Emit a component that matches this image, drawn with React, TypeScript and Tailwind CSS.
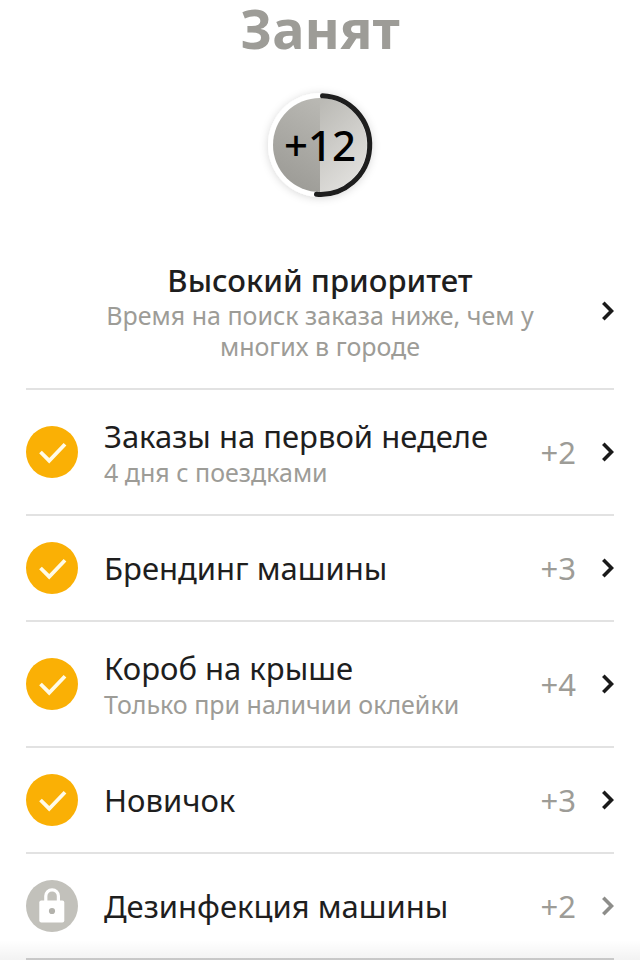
import clsx from 'clsx';

type Factor = {
  title: string;
  note?: string;
  points: string;
  locked?: boolean;
};

const factors: Factor[] = [
  { title: 'Заказы на первой неделе', note: '4 дня с поездками', points: '+2' },
  { title: 'Брендинг машины', points: '+3' },
  { title: 'Короб на крыше', note: 'Только при наличии оклейки', points: '+4' },
  { title: 'Новичок', points: '+3' },
  { title: 'Дезинфекция машины', points: '+2', locked: true },
];

function Chevron({ className }: { className?: string }) {
  return (
    <svg
      className={clsx('h-5 w-3 shrink-0', className)}
      viewBox="0 0 12 20"
      fill="none"
      stroke="currentColor"
      strokeWidth="3.6"
      aria-hidden="true"
    >
      <path d="M1.3 1.8 9.5 10l-8.2 8.2" />
    </svg>
  );
}

function CheckBadge() {
  return (
    <svg className="h-[52px] w-[52px] shrink-0" viewBox="0 0 52 52" fill="none" aria-hidden="true">
      <circle cx="26" cy="26" r="26" fill="#fab005" />
      <path d="m14.5 26 8.7 8.7L39 18.3" stroke="#fffbe8" strokeWidth="3.8" />
    </svg>
  );
}

function LockBadge() {
  return (
    <svg className="h-[52px] w-[52px] shrink-0" viewBox="0 0 52 52" fill="none" aria-hidden="true">
      <circle cx="26" cy="26" r="26" fill="#c2c1bb" />
      <path d="M19.8 21v-4.9a6.3 6.3 0 0 1 12.6 0V21" stroke="#fff" strokeWidth="3.2" />
      <rect x="13.3" y="20.5" width="25" height="22" rx="2" fill="#fff" />
      <circle cx="26" cy="31" r="3.1" fill="#b3b2ac" />
    </svg>
  );
}

function ScoreRing() {
  return (
    <div className="relative flex h-[106px] w-[106px] items-center justify-center">
      <svg className="absolute inset-0 h-full w-full overflow-visible" viewBox="0 0 106 106" fill="none" aria-hidden="true">
        <defs>
          <linearGradient id="left-half" x1="0.9" y1="0" x2="0.6" y2="1">
            <stop offset="0" stopColor="#b9b8b3" />
            <stop offset="1" stopColor="#9d9c97" />
          </linearGradient>
          <linearGradient id="right-half" x1="0" y1="0" x2="0.5" y2="1">
            <stop offset="0" stopColor="#b9b8b3" />
            <stop offset="1" stopColor="#e0dfdc" />
          </linearGradient>
          <filter id="ring-shadow" x="-20%" y="-20%" width="140%" height="140%">
            <feDropShadow dx="0" dy="1" stdDeviation="4" floodColor="#000" floodOpacity="0.16" />
          </filter>
        </defs>
        <circle cx="53" cy="53" r="52" fill="#fff" filter="url(#ring-shadow)" />
        <path d="M53 6a47 47 0 0 0 0 94z" fill="url(#left-half)" />
        <path d="M53 6a47 47 0 0 1 0 94z" fill="url(#right-half)" />
        <path d="M55.5 3.8A49.3 49.3 0 1 1 49.5 102.2" stroke="#1e1e1e" strokeWidth="5" strokeLinecap="round" />
      </svg>
      <span className="relative text-[42px] leading-none font-medium text-black">+12</span>
    </div>
  );
}

function FactorRow({ title, note, points, locked }: Factor) {
  return (
    <li className="border-b-2 border-[#e2e2e2] last:border-[#d2d2d2]">
      <button type="button" className="flex w-full items-center py-[26px] text-left">
        {locked ? <LockBadge /> : <CheckBadge />}
        <span className="ml-[26px] min-w-0 flex-1">
          <span className="block text-[31px] leading-10 text-[#1e1e1e]">{title}</span>
          {note && <span className="block text-[25px] leading-8 text-[#9d9c97]">{note}</span>}
        </span>
        <span className="mr-[26px] text-[31px] leading-10 text-[#9d9c97]">{points}</span>
        <Chevron className={locked ? 'text-[#8d8d8a]' : 'text-[#1a1a1a]'} />
      </button>
    </li>
  );
}

export default function App() {
  return (
    <main className="relative bg-white px-[26px] font-['Noto_Sans',sans-serif]">
      {/* Fade under the last row */}
      <div className="pointer-events-none absolute inset-x-0 bottom-0 h-5 bg-gradient-to-b from-transparent to-black/5" />

      <header className="flex flex-col items-center">
        <h1 className="text-[54px] leading-[56px] font-bold text-[#9d9c97]">Занят</h1>
        <div className="mt-9">
          <ScoreRing />
        </div>
      </header>

      <button type="button" className="mt-[62px] flex w-full items-center border-b-2 border-[#e2e2e2] pb-[26px]">
        <span className="flex-1 pr-[68px] pl-20 text-center">
          <span className="block text-[31px] leading-10 font-medium text-[#1e1e1e]">Высокий приоритет</span>
          <span className="block text-[25px] leading-[31px] text-[#9d9c97]">
            Время на поиск заказа ниже, чем у многих в городе
          </span>
        </span>
        <Chevron className="text-[#1a1a1a]" />
      </button>

      <ul>
        {factors.map((factor) => (
          <FactorRow key={factor.title} {...factor} />
        ))}
      </ul>
    </main>
  );
}
